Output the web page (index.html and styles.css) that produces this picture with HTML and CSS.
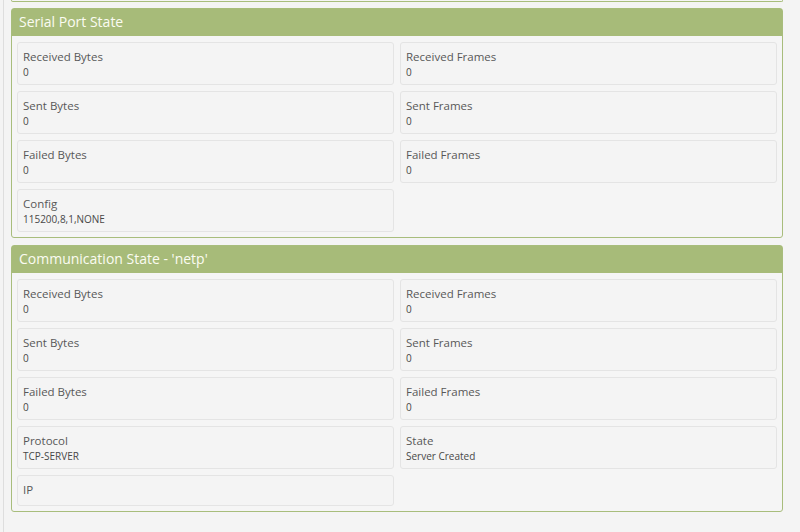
FILE: index.html
```html
<!DOCTYPE html>
<html>
<head>
<meta charset="utf-8">
<link rel="stylesheet" href="styles.css">
</head>
<body>
<div class="page">
  <div class="panel stub"></div>

  <section class="panel">
    <div class="panel-head">Serial Port State</div>
    <div class="panel-body">
      <div class="card"><div class="label">Received Bytes</div><div class="value">0</div></div>
      <div class="card"><div class="label">Received Frames</div><div class="value">0</div></div>
      <div class="card"><div class="label">Sent Bytes</div><div class="value">0</div></div>
      <div class="card"><div class="label">Sent Frames</div><div class="value">0</div></div>
      <div class="card"><div class="label">Failed Bytes</div><div class="value">0</div></div>
      <div class="card"><div class="label">Failed Frames</div><div class="value">0</div></div>
      <div class="card"><div class="label">Config</div><div class="value">115200,8,1,NONE</div></div>
    </div>
  </section>

  <section class="panel">
    <div class="panel-head">Communication State - 'netp'</div>
    <div class="panel-body">
      <div class="card"><div class="label">Received Bytes</div><div class="value">0</div></div>
      <div class="card"><div class="label">Received Frames</div><div class="value">0</div></div>
      <div class="card"><div class="label">Sent Bytes</div><div class="value">0</div></div>
      <div class="card"><div class="label">Sent Frames</div><div class="value">0</div></div>
      <div class="card"><div class="label">Failed Bytes</div><div class="value">0</div></div>
      <div class="card"><div class="label">Failed Frames</div><div class="value">0</div></div>
      <div class="card"><div class="label">Protocol</div><div class="value">TCP-SERVER</div></div>
      <div class="card"><div class="label">State</div><div class="value">Server Created</div></div>
      <div class="card short"><div class="label">IP</div></div>
    </div>
  </section>
</div>
</body>
</html>
```

FILE: styles.css
```css
html, body {
  margin: 0;
  padding: 0;
  background: #f4f4f4;
  font-family: "Open Sans", "Noto Sans", sans-serif;
}

.page {
  margin-left: 3px;
  border-left: 1px solid #dedede;
  padding-left: 7px;
  width: 780px;
  height: 532px;
  box-sizing: border-box;
  overflow: hidden;
}

.panel {
  width: 772px;
  border: 1px solid #a8bd7c;
  border-radius: 3px;
  background: #f5f5f5;
  margin-bottom: 7px;
  box-sizing: border-box;
}

.panel.stub {
  height: 2px;
  border-top: none;
  border-radius: 0 0 3px 3px;
  margin-bottom: 6px;
}

.panel-head {
  background: #a7bb79;
  color: #fbfbf2;
  font-size: 14px;
  height: 27px;
  line-height: 26px;
  padding-left: 7px;
}

.panel-body {
  display: grid;
  grid-template-columns: 1fr 1fr;
  gap: 6px;
  padding: 6px 5px 5px 5px;
}

.card {
  border: 1px solid #e4e4e4;
  border-radius: 3px;
  background: #f4f4f4;
  height: 43px;
  box-sizing: border-box;
  padding: 5px 5px 0 5px;
}

.card.short {
  height: 31px;
}

.label {
  font-size: 11.5px;
  color: #585858;
  line-height: 17px;
}

.value {
  font-size: 10px;
  color: #484848;
  line-height: 15px;
}
```
